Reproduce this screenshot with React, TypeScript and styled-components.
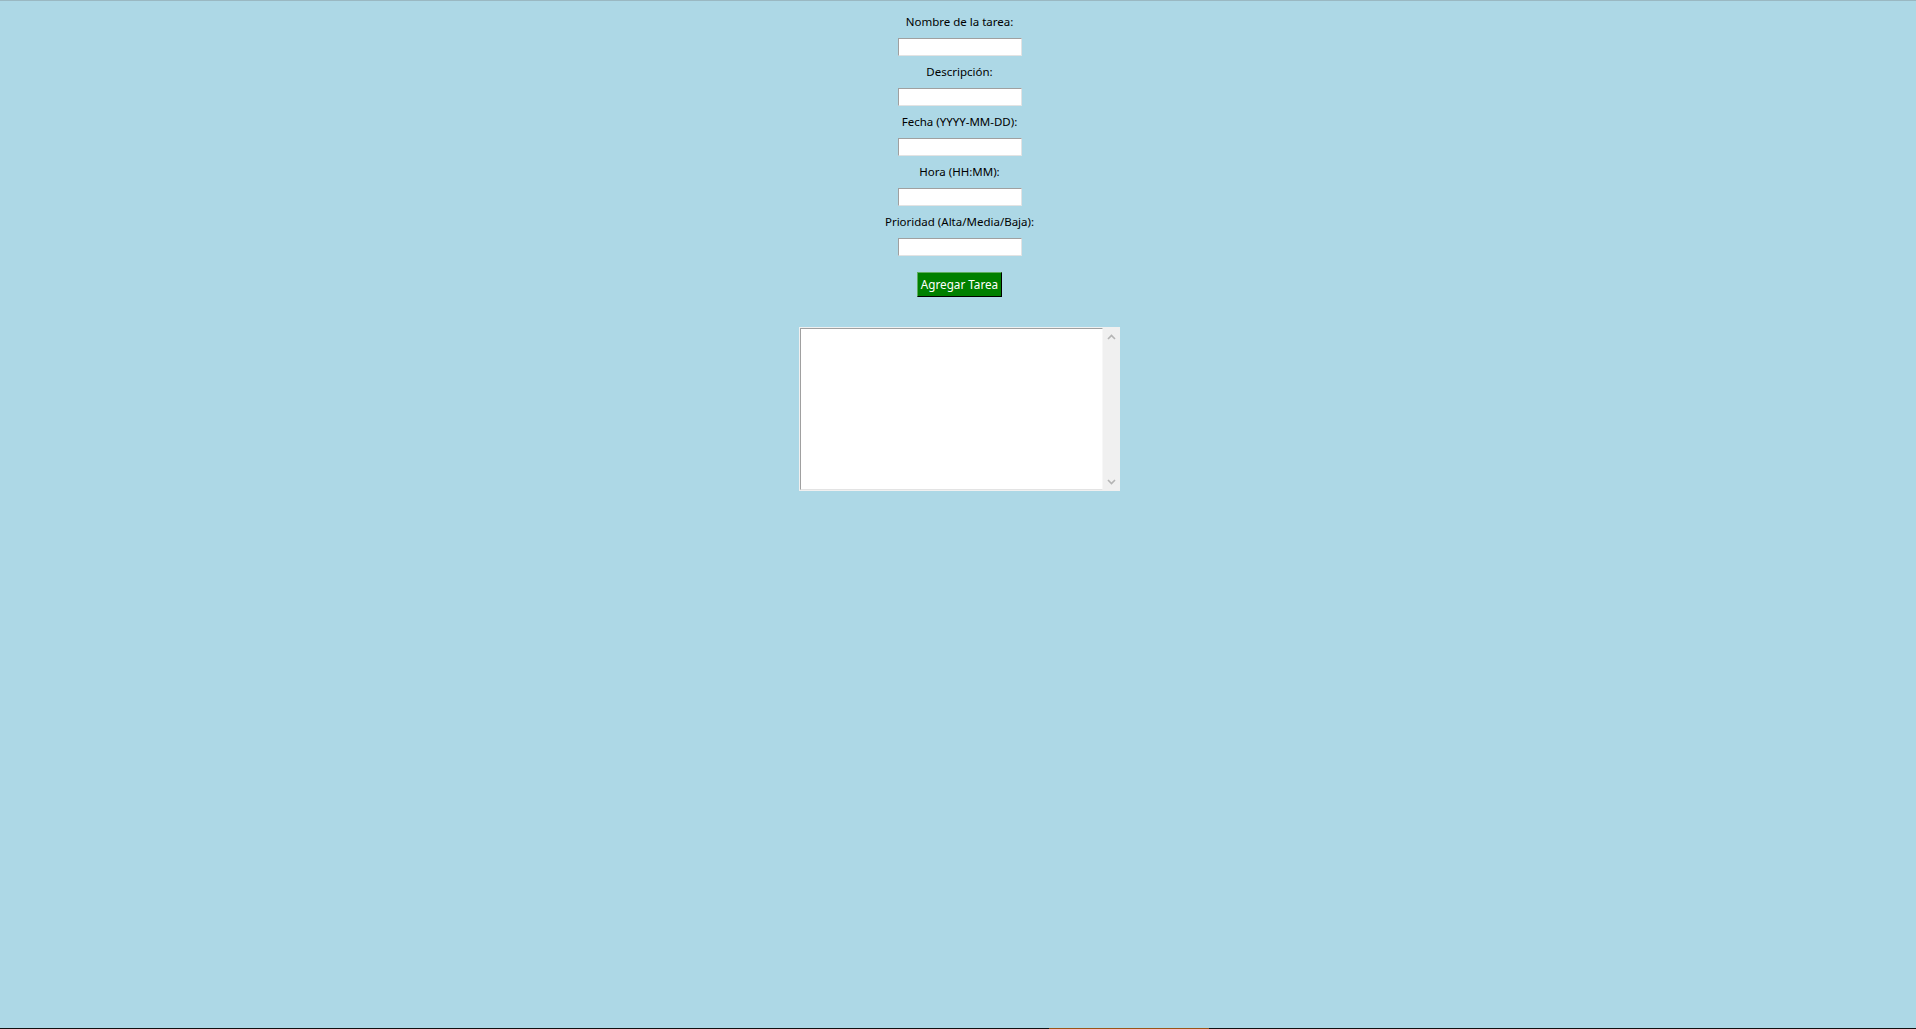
import React from 'react';
import styled, { createGlobalStyle } from 'styled-components';

// --- Estilos globales ---
const GlobalStyle = createGlobalStyle`
  html, body {
    margin: 0;
    padding: 0;
    background: #add8e6;
    overflow: hidden;
  }
`;

// --- Ventana completa ---
const Screen = styled.div`
  width: 1916px;
  height: 1029px;
  display: flex;
  flex-direction: column;
  background: #add8e6;
  font-family: 'Segoe UI', 'Noto Sans', sans-serif;
`;

const TopEdge = styled.div`
  height: 1px;
  background: #9ab8c2;
`;

// --- Columna central del formulario ---
const Form = styled.div`
  flex: 1;
  display: flex;
  flex-direction: column;
  align-items: center;
  padding: 12px 0 0 3px;
`;

const FieldLabel = styled.label<{ $first?: boolean }>`
  display: block;
  height: 20px;
  line-height: 18px;
  margin-top: ${(p) => (p.$first ? '0' : '7px')};
  font-size: 11.5px;
  color: #000;
  white-space: nowrap;
`;

const Entry = styled.input`
  box-sizing: border-box;
  width: 124px;
  height: 18px;
  margin: 5px 0 0;
  padding: 0 2px;
  background: #fff;
  border: none;
  border-top: 1px solid #a0a0a0;
  border-left: 1px solid #a0a0a0;
  border-right: 1px solid #e3e3e3;
  border-bottom: 1px solid #e3e3e3;
  outline: none;
  font-family: inherit;
  font-size: 12px;
`;

const AddButton = styled.button`
  box-sizing: border-box;
  width: 85px;
  height: 25px;
  margin-top: 16px;
  padding: 0 0 1px;
  background: #008000;
  color: #fff;
  font-family: inherit;
  font-size: 11.7px;
  border: 1px solid;
  border-color: #5fae5f #000 #000 #5fae5f;
  cursor: pointer;
`;

// --- Lista de tareas con barra de desplazamiento ---
const ListFrame = styled.div`
  box-sizing: border-box;
  width: 321px;
  height: 164px;
  margin-top: 30px;
  padding: 1px;
  display: flex;
  background: #f0f0f0;
`;

const TaskList = styled.div`
  box-sizing: border-box;
  width: 303px;
  height: 100%;
  background: #fff;
  border-top: 1px solid #a0a0a0;
  border-left: 1px solid #a0a0a0;
  border-right: 1px solid #f7f7f7;
  border-bottom: 1px solid #e3e3e3;
`;

const ScrollBar = styled.div`
  flex: 1;
  display: flex;
  flex-direction: column;
  justify-content: space-between;
  align-items: center;
  padding: 6px 0 5px;
  background: #f0f0f0;
`;

const BottomEdge = styled.div`
  height: 1px;
  display: flex;
  background: #111;
`;

const TaskbarItem = styled.div<{ $w: number; $c: string }>`
  width: ${(p) => p.$w}px;
  background: ${(p) => p.$c};
`;

const Chevron: React.FC<{ up?: boolean }> = ({ up }) => (
  <svg width="9" height="6" viewBox="0 0 9 6">
    <path
      d={up ? 'M1 5 L4.5 1.5 L8 5' : 'M1 1 L4.5 4.5 L8 1'}
      fill="none"
      stroke="#b4b4b4"
      strokeWidth="1.6"
    />
  </svg>
);

const fields = [
  'Nombre de la tarea:',
  'Descripción:',
  'Fecha (YYYY-MM-DD):',
  'Hora (HH:MM):',
  'Prioridad (Alta/Media/Baja):',
];

const App: React.FC = () => {
  return (
    <Screen>
      <GlobalStyle />
      <TopEdge />
      <Form>
        {fields.map((f, i) => (
          <React.Fragment key={f}>
            <FieldLabel $first={i === 0}>{f}</FieldLabel>
            <Entry />
          </React.Fragment>
        ))}
        <AddButton>Agregar Tarea</AddButton>
        <ListFrame>
          <TaskList />
          <ScrollBar>
            <Chevron up />
            <Chevron />
          </ScrollBar>
        </ListFrame>
      </Form>
      <BottomEdge>
        <TaskbarItem $w={1049} $c="#111" />
        <TaskbarItem $w={160} $c="#9a5418" />
      </BottomEdge>
    </Screen>
  );
};

export default App;
